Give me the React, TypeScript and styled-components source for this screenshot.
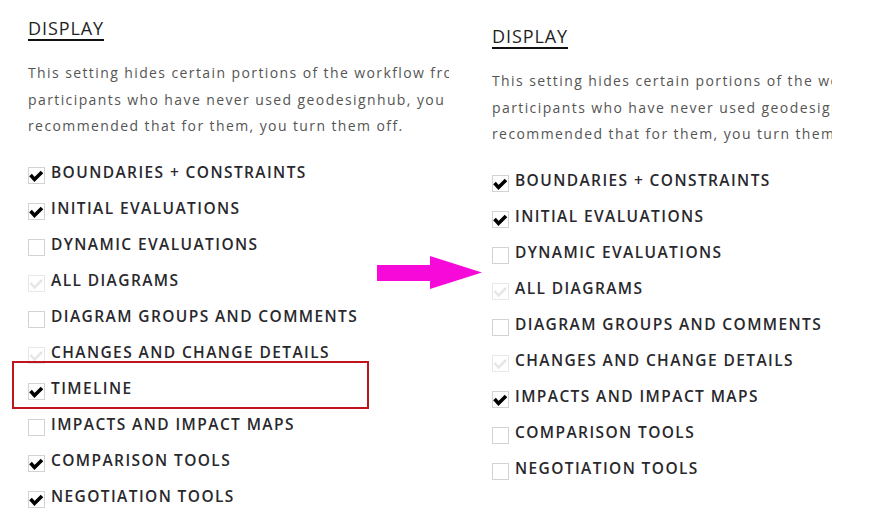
import React from "react";
import styled, { createGlobalStyle, css } from "styled-components";

const Global = createGlobalStyle`
  html, body { margin: 0; padding: 0; background: #ffffff; }
  body { font-family: "Open Sans", "Liberation Sans", sans-serif; }
`;

type CheckState = "on" | "off" | "disabled";
type Item = { label: string; state: CheckState; highlight?: boolean };

const leftItems: Item[] = [
  { label: "BOUNDARIES + CONSTRAINTS", state: "on" },
  { label: "INITIAL EVALUATIONS", state: "on" },
  { label: "DYNAMIC EVALUATIONS", state: "off" },
  { label: "ALL DIAGRAMS", state: "disabled" },
  { label: "DIAGRAM GROUPS AND COMMENTS", state: "off" },
  { label: "CHANGES AND CHANGE DETAILS", state: "disabled" },
  { label: "TIMELINE", state: "on", highlight: true },
  { label: "IMPACTS AND IMPACT MAPS", state: "off" },
  { label: "COMPARISON TOOLS", state: "on" },
  { label: "NEGOTIATION TOOLS", state: "on" },
];

const rightItems: Item[] = [
  { label: "BOUNDARIES + CONSTRAINTS", state: "on" },
  { label: "INITIAL EVALUATIONS", state: "on" },
  { label: "DYNAMIC EVALUATIONS", state: "off" },
  { label: "ALL DIAGRAMS", state: "disabled" },
  { label: "DIAGRAM GROUPS AND COMMENTS", state: "off" },
  { label: "CHANGES AND CHANGE DETAILS", state: "disabled" },
  { label: "IMPACTS AND IMPACT MAPS", state: "on" },
  { label: "COMPARISON TOOLS", state: "off" },
  { label: "NEGOTIATION TOOLS", state: "off" },
];

const Page = styled.div`
  position: relative;
  display: flex;
  width: 884px;
  height: 525px;
  overflow: hidden;
`;

const Panel = styled.section<{ $offsetY: number; $width: number; $gapLeft: number }>`
  margin-left: ${(p) => p.$gapLeft}px;
  padding-top: ${(p) => 18 + p.$offsetY}px;
  padding-left: 28px;
  width: ${(p) => p.$width}px;
  overflow: hidden;
  flex: none;
`;

const Heading = styled.h2`
  display: inline-block;
  margin: 0;
  font-family: "Open Sans", sans-serif;
  font-weight: 400;
  font-size: 18px;
  line-height: 21px;
  letter-spacing: 0.9px;
  color: #1f1f24;
  border-bottom: 2px solid #111;
`;

const Intro = styled.p`
  margin: 19px 0 22px;
  width: 480px;
  font-size: 14px;
  line-height: 26.5px;
  letter-spacing: 1.4px;
  color: #555;
  white-space: nowrap;
`;

const List = styled.ul`
  list-style: none;
  margin: 0;
  padding: 0;
`;

const Row = styled.li<{ $highlight?: boolean }>`
  position: relative;
  display: flex;
  align-items: flex-start;
  gap: 6px;
  height: 36px;
  ${(p) =>
    p.$highlight &&
    css`
      &::after {
        content: "";
        position: absolute;
        left: -16px;
        top: -17px;
        width: 353px;
        height: 44px;
        border: 2px solid #c0151d;
        pointer-events: none;
      }
    `}
`;

const Box = styled.span<{ $state: CheckState }>`
  flex: none;
  box-sizing: border-box;
  width: 17px;
  height: 17px;
  margin-top: 5px;
  border: 1px solid ${(p) => (p.$state === "disabled" ? "#e8e8e8" : "#d3d3d3")};
  background: #fff;
  display: flex;
  align-items: center;
  justify-content: center;
`;

const Label = styled.span`
  font-family: "Open Sans", sans-serif;
  font-weight: 600;
  font-size: 15.5px;
  line-height: 20px;
  letter-spacing: 1.4px;
  color: #28282d;
  white-space: nowrap;
`;

const Arrow = styled.svg`
  position: absolute;
  left: 376px;
  top: 255px;
`;

function Check({ state }: { state: CheckState }) {
  return (
    <Box $state={state}>
      {state !== "off" && (
        <svg width="15" height="15" viewBox="0 0 15 15">
          <path
            d="M1.5 7 L5.5 11.5 L13 4"
            fill="none"
            stroke={state === "disabled" ? "#e6e6e6" : "#000"}
            strokeWidth={state === "disabled" ? 2.5 : 3.6}
            strokeLinejoin="miter"
          />
        </svg>
      )}
    </Box>
  );
}

function SettingsPanel({
  items,
  offsetY,
  width,
  gapLeft,
}: {
  items: Item[];
  offsetY: number;
  width: number;
  gapLeft: number;
}) {
  return (
    <Panel $offsetY={offsetY} $width={width} $gapLeft={gapLeft}>
      <Heading>DISPLAY</Heading>
      <Intro>
        This setting hides certain portions of the workflow from
        <br />
        participants who have never used geodesignhub, you
        <br />
        recommended that for them, you turn them off.
      </Intro>
      <List>
        {items.map((it) => (
          <Row key={it.label} $highlight={it.highlight}>
            <Check state={it.state} />
            <Label>{it.label}</Label>
          </Row>
        ))}
      </List>
    </Panel>
  );
}

export default function App() {
  return (
    <>
      <Global />
      <Page>
        <SettingsPanel items={leftItems} offsetY={0} width={421} gapLeft={0} />
        <SettingsPanel items={rightItems} offsetY={8} width={340} gapLeft={15} />
        <Arrow width="110" height="36" viewBox="0 0 110 36">
          <polygon points="1,10 54,10 54,1 106,17.5 54,34 54,26 1,26" fill="#f70ad9" />
        </Arrow>
      </Page>
    </>
  );
}
